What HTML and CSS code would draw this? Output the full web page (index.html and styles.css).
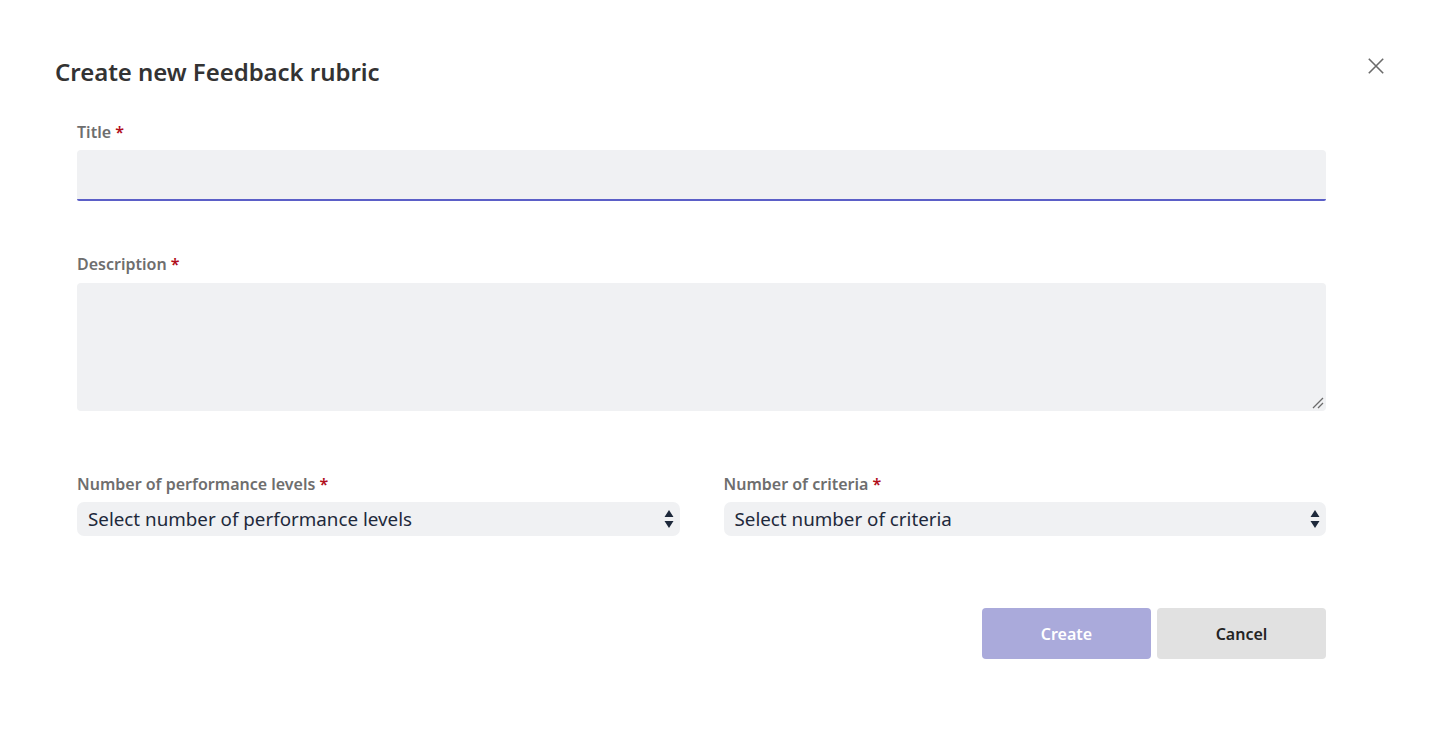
FILE: index.html
```html
<!DOCTYPE html>
<html>
<head>
<meta charset="utf-8">
<link rel="stylesheet" href="styles.css">
</head>
<body>
<div class="dialog">
  <div class="header">
    <h1 class="heading">Create new Feedback rubric</h1>
    <button class="close" aria-label="Close">
      <svg width="16" height="16" viewBox="0 0 16 16"><path d="M0.8 0.8L15.2 15.2M15.2 0.8L0.8 15.2" stroke="#6b6b6b" stroke-width="1.6" fill="none"/></svg>
    </button>
  </div>
  <div class="form">
    <div class="field f-title">
      <label class="label">Title <span class="req">*</span></label>
      <input class="input" type="text">
    </div>
    <div class="field f-desc">
      <label class="label">Description <span class="req">*</span></label>
      <div class="textarea">
        <svg class="grip" width="12" height="12" viewBox="0 0 12 12"><path d="M1 11L11 1M6 11L11 6" stroke="#6b6b6b" stroke-width="1.3" fill="none"/></svg>
      </div>
    </div>
    <div class="row">
      <div class="field">
        <label class="label">Number of performance levels <span class="req">*</span></label>
        <div class="select"><span>Select number of performance levels</span>
          <svg width="10" height="20" viewBox="0 0 10 20"><path d="M5 1L9.5 8H0.5Z M5 19L9.5 12H0.5Z" fill="#1e293b"/></svg>
        </div>
      </div>
      <div class="field">
        <label class="label">Number of criteria <span class="req">*</span></label>
        <div class="select"><span>Select number of criteria</span>
          <svg width="10" height="20" viewBox="0 0 10 20"><path d="M5 1L9.5 8H0.5Z M5 19L9.5 12H0.5Z" fill="#1e293b"/></svg>
        </div>
      </div>
    </div>
    <div class="actions">
      <button class="btn primary">Create</button>
      <button class="btn secondary">Cancel</button>
    </div>
  </div>
</div>
</body>
</html>
```

FILE: styles.css
```css
html, body {
  margin: 0;
  padding: 0;
  background: #ffffff;
}
body {
  font-family: "Noto Sans", "Open Sans", sans-serif;
  color: #242424;
}
.dialog {
  padding: 52px 45px 0 55px;
}
.header {
  display: flex;
  justify-content: space-between;
  align-items: flex-start;
}
.heading {
  margin: 0;
  font-size: 24px;
  font-weight: 600;
  color: #333333;
  line-height: 40px;
  letter-spacing: -0.05px;
}
.close {
  border: none;
  background: none;
  padding: 0;
  margin-top: 6px;
  width: 16px;
  height: 16px;
  cursor: pointer;
}
.form {
  padding: 0 58px 0 22px;
}
.field {
  display: flex;
  flex-direction: column;
}
.label {
  font-size: 16px;
  font-weight: 600;
  color: #6e6e6e;
  line-height: 20px;
}
.req {
  color: #b10e1c;
}
.f-title {
  margin-top: 30px;
}
.f-title .label {
  margin-bottom: 8px;
}
.input {
  box-sizing: border-box;
  height: 51px;
  border: none;
  border-bottom: 2px solid #5b5fc7;
  border-radius: 4px 4px 2px 2px;
  background: #f0f1f3;
  outline: none;
  font: inherit;
}
.f-desc {
  margin-top: 53px;
}
.f-desc .label {
  margin-bottom: 9px;
}
.textarea {
  height: 128px;
  background: #f0f1f3;
  border-radius: 4px;
  position: relative;
}
.grip {
  position: absolute;
  right: 2px;
  bottom: 2px;
}
.row {
  display: grid;
  grid-template-columns: 1fr 1fr;
  column-gap: 44px;
  margin-top: 63px;
}
.row .label {
  margin-bottom: 8px;
}
.select {
  height: 34px;
  box-sizing: border-box;
  background: #f0f1f3;
  border-radius: 7px;
  display: flex;
  align-items: center;
  justify-content: space-between;
  padding: 0 6px 0 11px;
  font-size: 18.8px;
  color: #1e293b;
}
.actions {
  display: flex;
  justify-content: flex-end;
  gap: 6px;
  margin-top: 72px;
}
.btn {
  width: 169px;
  height: 51px;
  border: none;
  border-radius: 4px;
  font-family: inherit;
  font-size: 16px;
  font-weight: 600;
}
.primary {
  background: #aaaadb;
  color: #ffffff;
}
.secondary {
  background: #e1e1e1;
  color: #242424;
}
```
